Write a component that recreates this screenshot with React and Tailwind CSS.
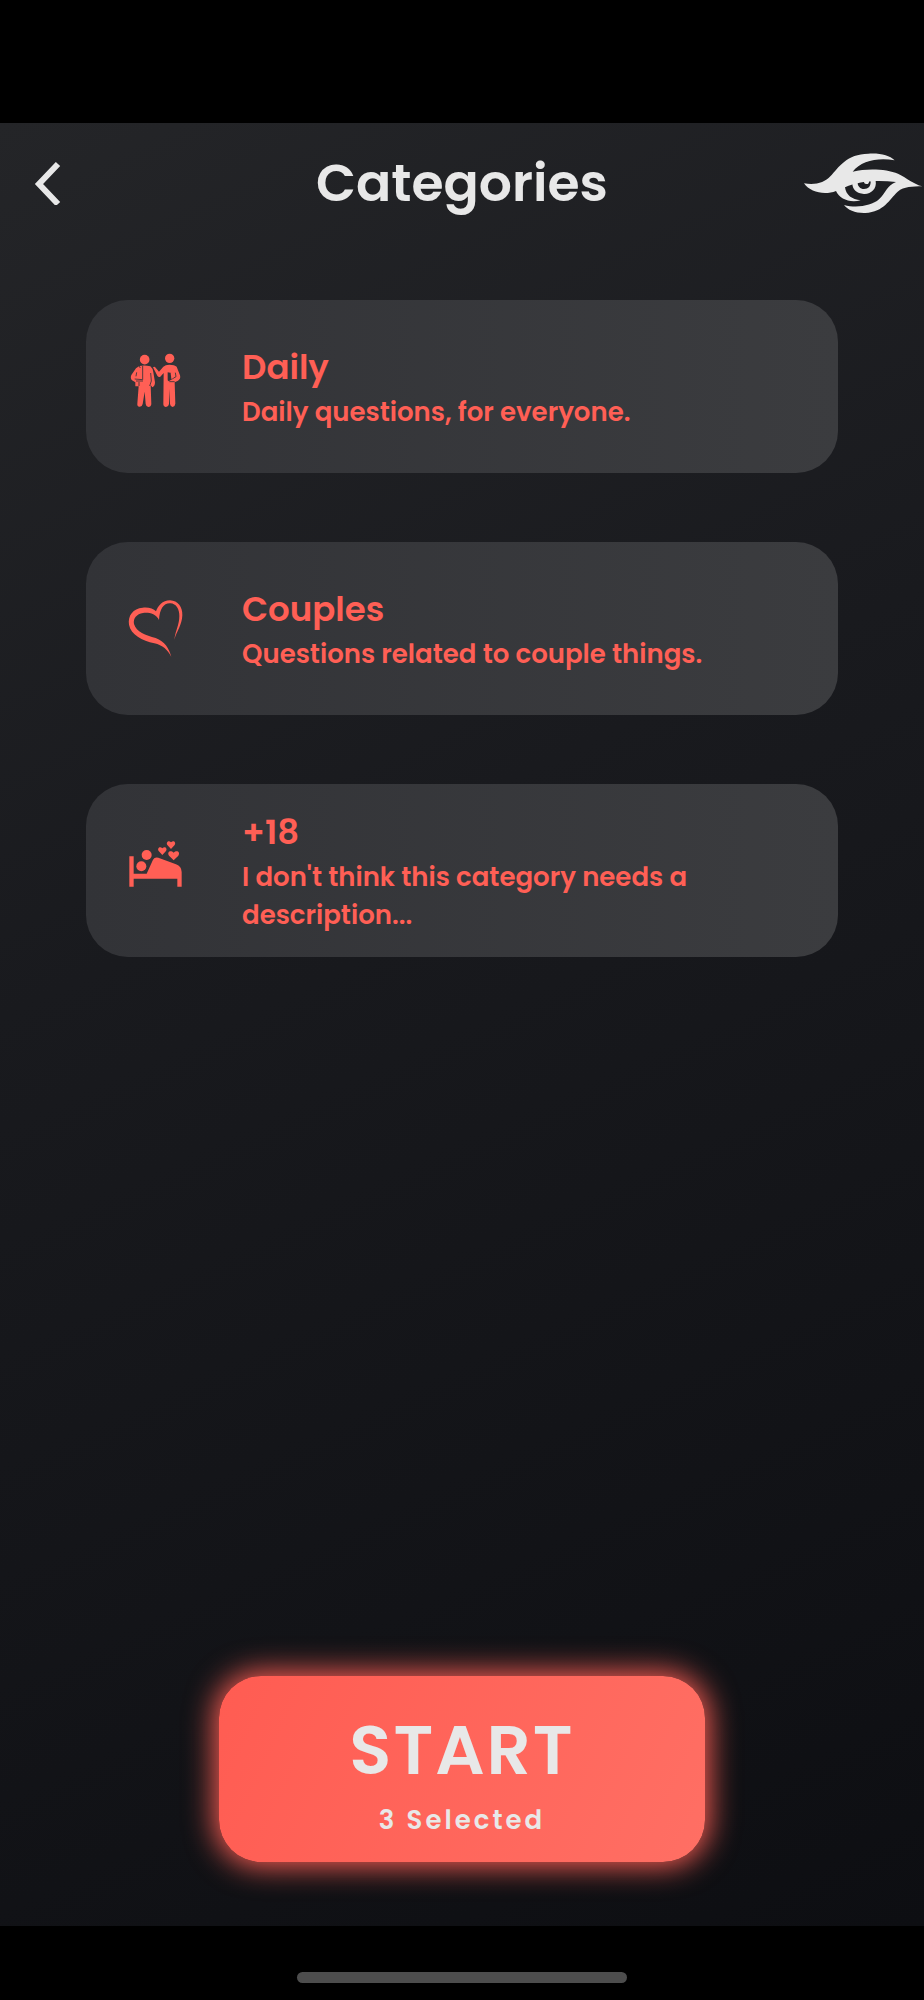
import { useState } from "react";

function FriendsIcon() {
  return (
    <svg viewBox="0 19 270 270" className="size-[90px] shrink-0" fill="currentColor" aria-hidden="true">
      <circle cx="104" cy="72" r="14.5" />
      <circle cx="179" cy="68" r="14" />
      <path d="M88 91 Q104 87 121 92 Q128 97 130 110 L135 140 Q135 152 127 155 L122 148 L124 205 Q123 214 115 214 Q108 213 107 205 L104 168 L98 205 Q96 214 88 213 Q81 212 82 204 L86 152 L76 152 L76 140 L66 134 Q60 128 64 118 L78 98 Z" />
      <path d="M129 95 Q133 91 137 96 L147 108 L160 93 Q166 87 178 87 Q194 87 200 93 L210 119 Q213 130 204 135 L194 140 L196 204 Q195 213 188 214 Q181 213 180 205 L179 160 L177 205 Q176 213 168 214 Q160 213 160 205 L161 112 L151 123 Q146 126 142 120 Z" />
      <g fill="none" stroke="#333438" strokeWidth="2.5">
        <path d="M86 89 L91 97 M98 91 V132 L74 130 M99 136 H78 M87 139 V151 M78 122 L80 110 M122 112 L124 136 L119 151" />
        <path d="M196 111 L198 123 L188 129 M178 138 H194" />
      </g>
      <path d="M173 110 L188 113 V130 L176 137 L173 134 Z" fill="#333438" />
      <path d="M182 112 L190 110 V127 L184 130 Z" fill="currentColor" />
    </svg>
  );
}

function HeartIcon() {
  return (
    <svg viewBox="0 11 270 270" className="size-[90px] shrink-0" fill="currentColor" aria-hidden="true">
      <path d="M147 119 C137 99 116 96 99 98 C80 101 69 114 72 131 C79 156 107 164 137 173 C164 183 178 205 184 230 C173 208 158 195 133 189 C97 181 62 163 57 133 C53 106 69 84 98 82 C116 80 130 85 138 93 C144 77 157 60 180 60 C204 61 218 80 217 105 C216 134 201 151 193 178 C197 150 208 132 208 108 C208 86 199 70 181 69 C161 68 149 86 147 119 Z" />
    </svg>
  );
}

function BedIcon() {
  return (
    <svg viewBox="0 2 270 270" className="size-[90px] shrink-0" fill="currentColor" aria-hidden="true">
      <path d="M58 93 H71 V145 H110 L129 103 Q134 94 145 97 L198 117 Q215 124 215 140 V184 H202 V160 H71 V184 H58 Z" />
      <circle cx="110" cy="89" r="15" />
      <circle cx="94" cy="123" r="15" />
      <path d="M157 89 L146 77 C141 70 149 61 157 69 C165 61 173 70 168 77 Z" />
      <path d="M183 71 L172 59 C167 51 176 43 183 51 C191 43 199 51 194 59 Z" />
      <path d="M191 105 L177 91 C170 81 181 72 191 82 C201 72 212 81 205 91 Z" />
    </svg>
  );
}

function EyeLogo() {
  return (
    <svg viewBox="42 40 357 183" className="h-[61px] w-[119px]" fill="currentColor" aria-hidden="true">
      <path d="M42 131 C76 137 104 129 121 110 C147 82 170 43 235 42 C272 40 298 47 314 62 C266 52 213 63 188 96 C232 85 291 88 324 102 C352 116 370 133 397 140 C366 141 343 140 323 156 C297 180 283 216 226 220 C196 221 174 211 162 196 C199 206 245 199 267 179 C287 160 291 137 318 127 C262 120 205 124 165 143 C168 166 186 180 212 182 C178 191 149 177 138 154 C104 168 60 158 42 131 Z" />
      <path d="M187 131 L203 127 C202 140 211 148 222 148 C235 148 243 139 242 124 L257 124 C261 147 243 164 222 163 C200 162 187 149 187 131 Z" />
      <path d="M222 123 L237 123 C238 130 234 134 229 133 C224 133 221 129 222 123 Z" />
    </svg>
  );
}

const categories = [
  { id: "daily", title: "Daily", text: "Daily questions, for everyone.", Icon: FriendsIcon },
  { id: "couples", title: "Couples", text: "Questions related to couple things.", Icon: HeartIcon },
  { id: "adult", title: "+18", text: "I don't think this category needs a description...", Icon: BedIcon },
];

function CategoryCard({ category, selected, onToggle }) {
  const { title, text, Icon } = category;
  return (
    <button
      type="button"
      aria-pressed={selected}
      onClick={onToggle}
      className={`flex min-h-[173px] w-full items-center gap-[42px] rounded-[42px] bg-linear-to-r from-[#323337] to-[#3b3c3f] pr-10 pl-6 text-left ${selected ? "text-[#ff5f55]" : "text-[#e8e8e8]"}`}
    >
      <Icon />
      <span className="flex flex-col pb-0.5 font-semibold">
        <span className="text-[34px] leading-[52px]">{title}</span>
        <span className="text-[26px] leading-[38px]">{text}</span>
      </span>
    </button>
  );
}

export default function App() {
  const [selected, setSelected] = useState(["daily", "couples", "adult"]);
  const toggle = (id) =>
    setSelected((now) => (now.includes(id) ? now.filter((x) => x !== id) : [...now, id]));

  return (
    <div className="flex min-h-screen flex-col bg-black pt-[123px] font-['Poppins','Inter',sans-serif] text-[#e8e8e8]">
      <main className="flex flex-1 flex-col bg-[linear-gradient(155deg,#242528_0%,#191a1e_40%,#0d0e12_100%)]">
        <header className="grid h-[120px] grid-cols-[1fr_auto_1fr] items-center">
          <button type="button" aria-label="Back" className="ml-[34px] w-7">
            <svg viewBox="0 0 28 44" className="h-11 w-7" fill="none" stroke="currentColor" strokeWidth="6" aria-hidden="true">
              <path d="M24 3 L5 23 L24 43" />
            </svg>
          </button>
          <h1 className="text-[52px] font-semibold">Categories</h1>
          <div className="flex justify-end pr-px">
            <EyeLogo />
          </div>
        </header>
        <section className="flex flex-col gap-[69px] px-[86px] pt-[57px]">
          {categories.map((c) => (
            <CategoryCard
              key={c.id}
              category={c}
              selected={selected.includes(c.id)}
              onToggle={() => toggle(c.id)}
            />
          ))}
        </section>
        <div className="mt-auto flex justify-center px-6 pt-12 pb-16">
          <button
            type="button"
            className="flex h-[186px] w-full max-w-[486px] flex-col items-center justify-center rounded-[42px] bg-[linear-gradient(115deg,#ff5c52,#ff6f64)] pt-3.5 shadow-[0_0_30px_4px_#ff5f55]"
          >
            <span className="text-[69px] leading-[88px] font-semibold tracking-[2px]">START</span>
            <span className="text-[26px] leading-[52px] font-semibold tracking-[3px]">{selected.length} Selected</span>
          </button>
        </div>
      </main>
      <footer className="flex h-[74px] items-center justify-center pt-7">
        <div className="h-[11px] w-[330px] rounded-full bg-[#4d4d4d]" />
      </footer>
    </div>
  );
}
